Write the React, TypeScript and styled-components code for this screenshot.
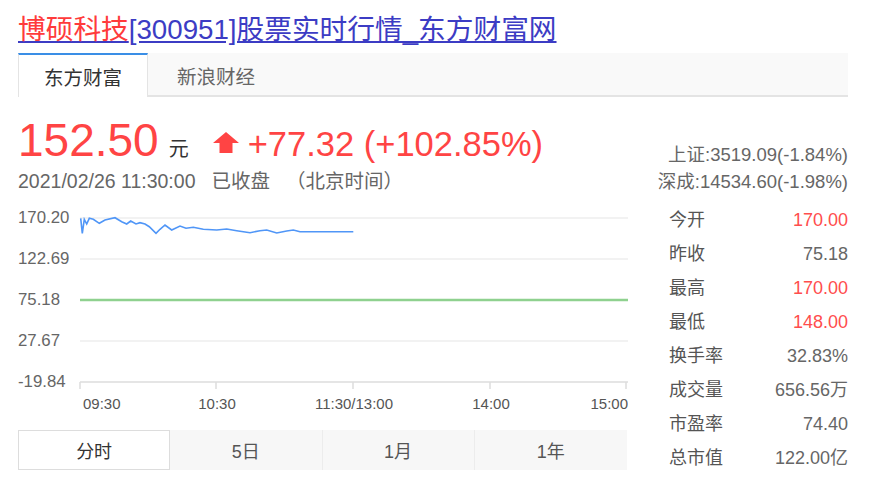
import styled, { createGlobalStyle } from "styled-components";

const GlobalStyle = createGlobalStyle`
  body {
    margin: 0;
    background: #fff;
    font-family: "Liberation Sans", "Noto Sans CJK SC", sans-serif;
    color: #666;
  }
`;

const Page = styled.div`
  width: 870px;
  height: 486px;
  box-sizing: border-box;
  padding: 12px 22px 0 18px;
  overflow: hidden;
`;

const Title = styled.h1`
  margin: 0 0 5px;
  font-size: 27.7px;
  font-weight: normal;
  line-height: 36px;
  white-space: nowrap;

  a {
    color: #3c3cc4;
    text-decoration: underline;
  }

  .name {
    color: #ff3b3b;
  }
`;

const TabBar = styled.ul`
  display: flex;
  margin: 0;
  padding: 0;
  list-style: none;
  height: 42px;
  background: #f9f9f9;
  border-bottom: 2px solid #e4e4e4;
`;

const Tab = styled.li<{ $active?: boolean }>`
  display: flex;
  align-items: center;
  box-sizing: border-box;
  padding: 0 ${(p) => (p.$active ? "25px" : "28px")};
  height: ${(p) => (p.$active ? "44px" : "42px")};
  font-size: 19.5px;
  color: ${(p) => (p.$active ? "#333" : "#666")};
  background: ${(p) => (p.$active ? "#fff" : "transparent")};
  border-top: 2px solid ${(p) => (p.$active ? "#3a8ee6" : "transparent")};
  border-left: 1px solid ${(p) => (p.$active ? "#e4e4e4" : "transparent")};
  border-right: 1px solid ${(p) => (p.$active ? "#e4e4e4" : "transparent")};
`;

const Body = styled.div`
  display: flex;
`;

const LeftCol = styled.div`
  width: 610px;
  flex: none;
`;

const RightCol = styled.div`
  flex: 1;
  padding-top: 44px;
`;

const PriceRow = styled.div`
  display: flex;
  align-items: baseline;
  margin-top: 20px;
  height: 45px;
  color: #f44;
`;

const Price = styled.span`
  font-size: 46px;
  line-height: 1;
`;

const Unit = styled.span`
  font-size: 20px;
  color: #333;
  margin-left: 10px;
`;

const Change = styled.span`
  display: flex;
  align-items: baseline;
  margin-left: 24px;
  font-size: 34.5px;

  svg {
    margin-right: 9px;
    align-self: center;
    position: relative;
    top: -2px;
  }
`;

const DateLine = styled.div`
  margin-top: 7px;
  font-size: 19.5px;
  line-height: 24px;
  color: #666;
  white-space: nowrap;

  span + span {
    margin-left: 16px;
  }
`;

const Chart = styled.svg`
  display: block;
  margin-top: 12px;
  font-family: "Liberation Sans", sans-serif;

  .ylabel {
    font-size: 16.8px;
    fill: #666;
  }
  .xlabel {
    font-size: 15px;
    fill: #555;
  }
`;

const Periods = styled.div`
  display: grid;
  grid-template-columns: repeat(4, 1fr);
  margin-top: 15px;
  width: 609px;
  height: 40px;
  background: #f7f7f7;
`;

const Period = styled.div<{ $active?: boolean }>`
  display: flex;
  align-items: center;
  justify-content: center;
  font-size: 18px;
  color: ${(p) => (p.$active ? "#333" : "#555")};
  background: ${(p) => (p.$active ? "#fff" : "transparent")};
  border: ${(p) => (p.$active ? "1px solid #ddd" : "none")};
  border-right: 1px solid ${(p) => (p.$active ? "#ddd" : "#ececec")};
  &:last-child {
    border-right: none;
  }
`;

const IndexLine = styled.div`
  text-align: right;
  font-size: 18.5px;
  line-height: 27px;
  color: #666;
  white-space: nowrap;
`;

const Stats = styled.dl`
  margin: 7.5px 0 0;
`;

const StatRow = styled.div<{ $up?: boolean }>`
  display: flex;
  justify-content: space-between;
  align-items: baseline;
  height: 34px;
  line-height: 34px;
  padding-left: 41px;
  font-size: 18px;

  dt {
    color: #555;
  }
  dd {
    margin: 0;
    color: ${(p) => (p.$up ? "#ff4d4d" : "#666")};
  }
`;

const stats = [
  { label: "今开", value: "170.00", up: true },
  { label: "昨收", value: "75.18" },
  { label: "最高", value: "170.00", up: true },
  { label: "最低", value: "148.00", up: true },
  { label: "换手率", value: "32.83%" },
  { label: "成交量", value: "656.56万" },
  { label: "市盈率", value: "74.40" },
  { label: "总市值", value: "122.00亿" },
];

const yLabels = ["170.20", "122.69", "75.18", "27.67", "-19.84"];
const gridY = [13, 54, 95, 136, 177];
const ticks = [62, 198, 335, 472, 608];

// intraday points, page coordinates
const line = [
  [80.7, 218.3], [82.3, 233.3], [84.3, 219.3], [86.7, 224], [89.3, 218.3],
  [93.3, 219.3], [99.3, 223.3], [105, 220], [115, 217.7], [121.7, 221.7],
  [126.7, 224], [130.7, 221], [136, 224], [140, 222.7], [145, 224],
  [149.3, 226.7], [156, 233.3], [160, 229.3], [165, 225], [171.7, 230],
  [180, 226], [186, 228.3], [193.3, 227.3], [203.3, 229.3], [216.7, 230],
  [226.7, 229], [236.7, 230.7], [250, 232.7], [260, 230.7], [266.7, 230],
  [276.7, 233], [286.7, 231], [293.3, 230], [300, 231.7], [353.3, 231.7],
];

function UpArrow() {
  return (
    <svg width="26" height="21" viewBox="0 0 26 21">
      <polygon points="13,0 26,11 19.5,11 19.5,21 6.5,21 6.5,11 0,11" fill="#f44" />
    </svg>
  );
}

export default function App() {
  const points = line.map(([x, y]) => `${x - 18},${y - 205}`).join(" ");

  return (
    <>
      <GlobalStyle />
      <Page>
        <Title>
          <a href="#">
            <span className="name">博硕科技</span>[300951]股票实时行情_东方财富网
          </a>
        </Title>

        <TabBar>
          <Tab $active>东方财富</Tab>
          <Tab>新浪财经</Tab>
        </TabBar>

        <Body>
          <LeftCol>
            <PriceRow>
              <Price>152.50</Price>
              <Unit>元</Unit>
              <Change>
                <UpArrow />
                +77.32 (+102.85%)
              </Change>
            </PriceRow>
            <DateLine>
              <span>2021/02/26 11:30:00</span>
              <span>已收盘</span>
              <span>（北京时间）</span>
            </DateLine>

            <Chart width="610" height="210" viewBox="0 0 610 210">
              {gridY.map((y, i) => (
                <g key={y}>
                  <line
                    x1="62"
                    x2="610"
                    y1={y}
                    y2={y}
                    stroke={i === 2 ? "#8fd18f" : i === 4 ? "#ddd" : "#eee"}
                    strokeWidth={i === 2 ? 2.5 : 1.5}
                  />
                  <text className="ylabel" x="0" y={y + 5}>
                    {yLabels[i]}
                  </text>
                </g>
              ))}
              {ticks.map((x) => (
                <line key={x} x1={x} x2={x} y1="177" y2="184" stroke="#ddd" strokeWidth="1.5" />
              ))}
              <polyline points={points} fill="none" stroke="#5096f7" strokeWidth="1.6" />
              <text className="xlabel" x="65" y="204">09:30</text>
              <text className="xlabel" x="199" y="204" textAnchor="middle">10:30</text>
              <text className="xlabel" x="336" y="204" textAnchor="middle">11:30/13:00</text>
              <text className="xlabel" x="473" y="204" textAnchor="middle">14:00</text>
              <text className="xlabel" x="610" y="204" textAnchor="end">15:00</text>
            </Chart>

            <Periods>
              <Period $active>分时</Period>
              <Period>5日</Period>
              <Period>1月</Period>
              <Period>1年</Period>
            </Periods>
          </LeftCol>

          <RightCol>
            <IndexLine>上证:3519.09(-1.84%)</IndexLine>
            <IndexLine>深成:14534.60(-1.98%)</IndexLine>
            <Stats>
              {stats.map((s) => (
                <StatRow key={s.label} $up={s.up}>
                  <dt>{s.label}</dt>
                  <dd>{s.value}</dd>
                </StatRow>
              ))}
            </Stats>
          </RightCol>
        </Body>
      </Page>
    </>
  );
}
